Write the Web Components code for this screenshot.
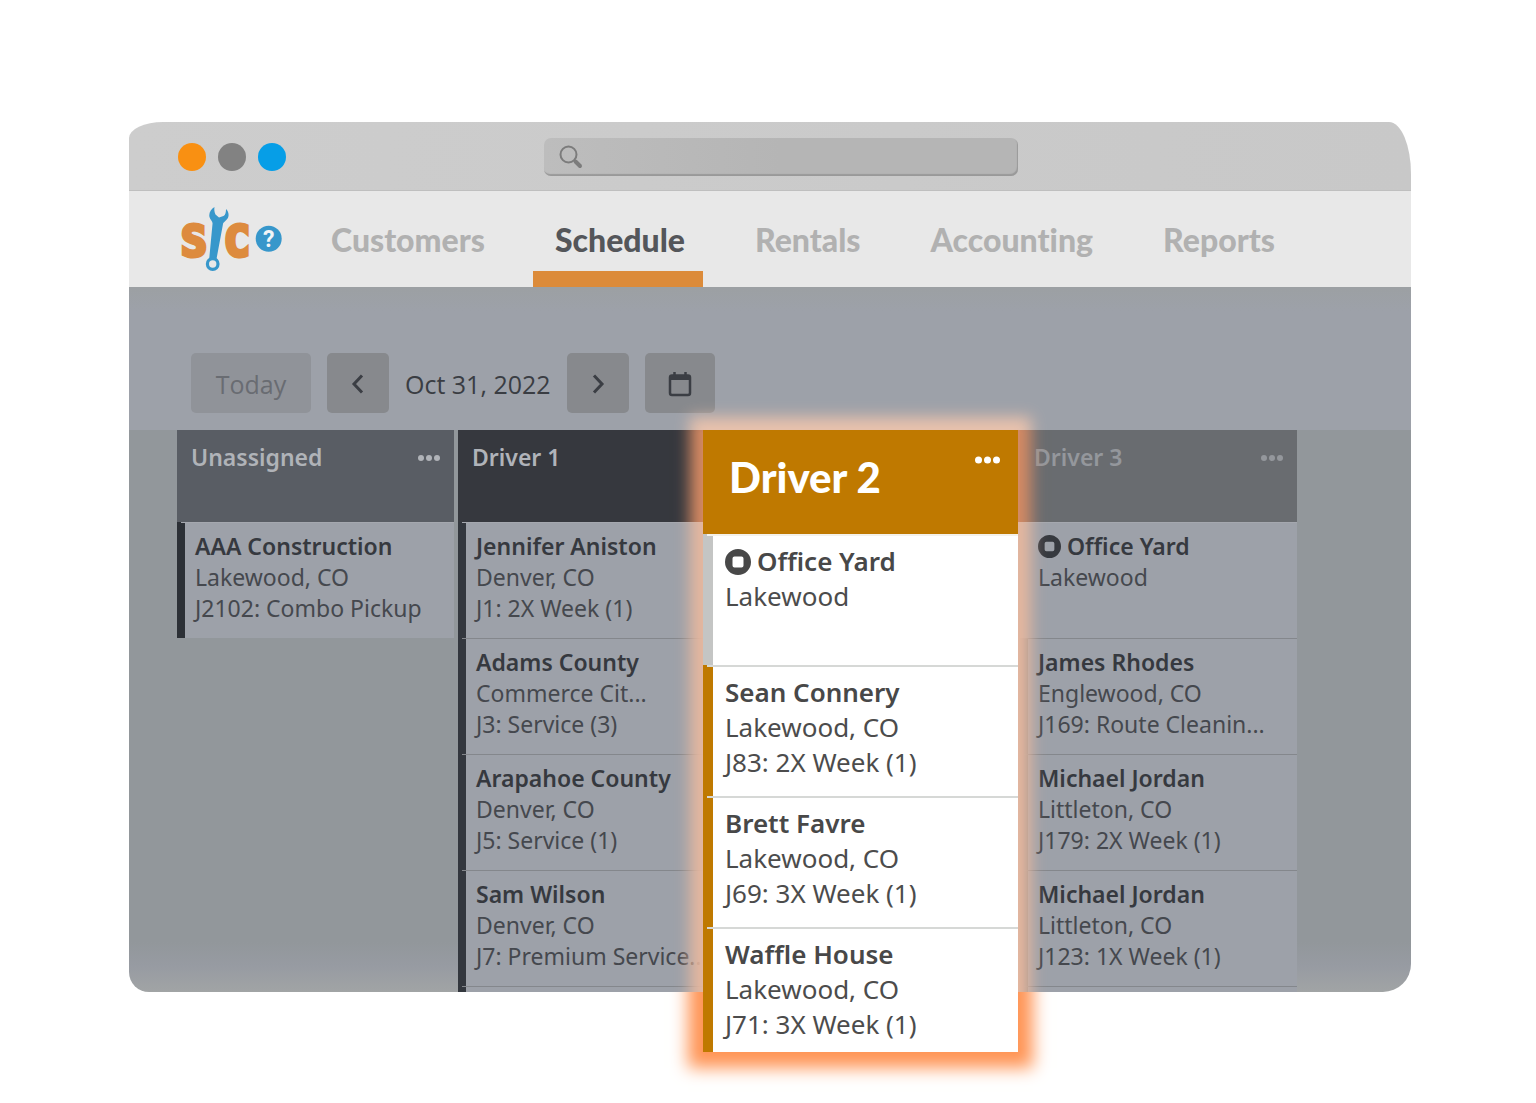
<!DOCTYPE html>
<html lang="en">
<head>
<meta charset="utf-8">
<meta name="viewport" content="width=device-width, initial-scale=1">
<title>Schedule</title>
<style>
  body { margin: 0; background: #fff; font-family: "Noto Sans", "Open Sans", sans-serif; color: #36393f; }
</style>
</head>
<body>
<app-window>
  <title-bar></title-bar>
  <main-nav>
    <nav-tab>Customers</nav-tab>
    <nav-tab active>Schedule</nav-tab>
    <nav-tab>Rentals</nav-tab>
    <nav-tab>Accounting</nav-tab>
    <nav-tab>Reports</nav-tab>
  </main-nav>
  <date-toolbar date="Oct 31, 2022"></date-toolbar>
  <schedule-board>
    <driver-column name="Unassigned" menu style="--head:#595d64;--head-text:#b0b3b8;--bar:#2c3036">
      <job-card name="AAA Construction" place="Lakewood, CO" job="J2102: Combo Pickup"></job-card>
    </driver-column>
    <driver-column name="Driver 1" style="--head:#36383e;--head-text:#b0b3b9;--bar:#33373e">
      <job-card name="Jennifer Aniston" place="Denver, CO" job="J1: 2X Week (1)"></job-card>
      <job-card name="Adams County" place="Commerce Cit..." job="J3: Service (3)"></job-card>
      <job-card name="Arapahoe County" place="Denver, CO" job="J5: Service (1)"></job-card>
      <job-card name="Sam Wilson" place="Denver, CO" job="J7: Premium Service..."></job-card>
      <job-card peek></job-card>
    </driver-column>
    <focus-column name="Driver 2">
      <job-card large yard name="Office Yard" place="Lakewood"></job-card>
      <job-card large name="Sean Connery" place="Lakewood, CO" job="J83: 2X Week (1)"></job-card>
      <job-card large name="Brett Favre" place="Lakewood, CO" job="J69: 3X Week (1)"></job-card>
      <job-card large last name="Waffle House" place="Lakewood, CO" job="J71: 3X Week (1)"></job-card>
    </focus-column>
    <driver-column name="Driver 3" menu style="--head:#696c70;--head-text:#94979c;--bar:#7f8286">
      <job-card yard name="Office Yard" place="Lakewood"></job-card>
      <job-card name="James Rhodes" place="Englewood, CO" job="J169: Route Cleanin..."></job-card>
      <job-card name="Michael Jordan" place="Littleton, CO" job="J179: 2X Week (1)"></job-card>
      <job-card name="Michael Jordan" place="Littleton, CO" job="J123: 1X Week (1)"></job-card>
      <job-card peek></job-card>
    </driver-column>
  </schedule-board>
</app-window>

<script>
const define = (tag, render) => customElements.define(tag, class extends HTMLElement {
  constructor() { super(); this.attachShadow({ mode: "open" }); }
  connectedCallback() { this.shadowRoot.innerHTML = render(this); }
});

define("app-window", () => `
  <style>
    :host { display: block; box-sizing: border-box; padding: 122px 125px 110px 129px; }
    main { display: flex; flex-direction: column; }
  </style>
  <main><slot></slot></main>`);

define("title-bar", () => `
  <style>
    :host { display: grid; grid-template-columns: 1fr 474px 1fr; align-items: center; box-sizing: border-box;
      height: 69px; padding: 1px 27px 0 49px; background: linear-gradient(90deg, #cdcdcd, #c8c8c8);
      border-bottom: 1px solid #bfbfbf; border-radius: 34px 22px 0 0 / 16px 52px 0 0; }
    .dots { display: flex; gap: 12px; }
    .dots i { width: 28px; height: 28px; border-radius: 50%; background: var(--c); }
    label { display: flex; align-items: center; gap: 10px; box-sizing: border-box; height: 38px; padding: 0 15px;
      border-radius: 7px; background: linear-gradient(90deg, #bdbdbd, #b5b5b5 50%);
      box-shadow: inset -1px -2px 1px #999; }
    input { flex: 1; min-width: 0; border: 0; outline: 0; background: none; font: 18px "Open Sans", sans-serif; }
  </style>
  <div class="dots"><i style="--c:#f99012"></i><i style="--c:#828282"></i><i style="--c:#069ee7"></i></div>
  <label>
    <svg width="24" height="24" viewBox="0 0 24 24" fill="none" stroke="#7c7c7c" aria-hidden="true">
      <circle cx="9.5" cy="9.5" r="8" stroke-width="2"/><path d="M15 15l2 2" stroke-width="2"/><path d="M16.500 16.500l4.500 4.500" stroke-width="4" stroke-linecap="round"/>
    </svg>
    <input type="search" aria-label="Search">
  </label>`);

define("main-nav", () => `
  <style>
    :host { display: flex; height: 96px; background: #e8e8e8; padding-left: 51px; }
    .logo { flex: none; margin: 15px 26px 0 0; }
    nav { display: flex; gap: 30px; }
  </style>
  <svg class="logo" width="103" height="66" viewBox="0 0 103 66" role="img" aria-label="Service logo">
    <g fill="#dd8b3e" stroke="#dd8b3e" stroke-width="4" font-family="DejaVu Sans Mono, monospace" font-weight="700" font-size="43">
      <text x="1" y="50">S</text><text x="44" y="50">C</text>
    </g>
    <path d="M34.500 1C31 3 28.500 7 29.500 11C30 14 33 15 32.500 18L29.200 53H36.500L43 18C43 16 48 14 48.500 10C48.800 7 48 5 46 3C46 6 45.500 9 43.500 10L39 11.500L35.500 8.500C34.500 6 34 4 34.500 1Z" fill="#3797cb" stroke="#e8e8e8" stroke-width="3" paint-order="stroke"/>
    <circle cx="32.700" cy="58" r="5.300" fill="#e8e8e8" stroke="#3797cb" stroke-width="3.200"/>
    <circle cx="88.700" cy="32.700" r="13" fill="#3797cb"/>
    <text x="88.700" y="41" text-anchor="middle" fill="#f2f5f7" font-family="Roboto, sans-serif" font-weight="700" font-size="23">?</text>
  </svg>
  <nav aria-label="Main"><slot></slot></nav>`);

define("nav-tab", el => `
  <style>
    :host { display: flex; }
    a { display: flex; align-items: center; box-sizing: border-box; padding: 17px 18px 0 22px; border-bottom: 16px solid transparent;
      font: 900 32px/40px Lato, sans-serif; font-variant-ligatures: none; color: #b1b1b1; text-decoration: none; }
    a.on { color: #54565a; border-color: #dc8b3a; }
  </style>
  <a href="#" class="${el.hasAttribute("active") ? "on" : ""}"><slot></slot></a>`);

define("date-toolbar", el => `
  <style>
    :host { display: flex; align-items: center; gap: 16px; padding: 66px 62px 17px; background: linear-gradient(#9ca0a3, #9da1a9 24px); }
    button { display: flex; align-items: center; justify-content: center; box-sizing: border-box; width: 62px; height: 60px;
      padding: 2px 0 0; border: 0; border-radius: 5px; background: #87898d; color: #3b3e44; font: 25px/32px "Open Sans", sans-serif; }
    .today { width: 120px; background: #909399; color: #696c72; }
    .cal { width: 70px; }
    time { padding-top: 2px; font: 25px/32px "Open Sans", sans-serif; color: #3a3d43; }
  </style>
  <button class="today">Today</button>
  <button aria-label="Previous day"><svg width="14" height="22" viewBox="0 0 14 22" fill="none" stroke="currentColor" stroke-width="3"><path d="M11 2.500L3 11l8 8.500"/></svg></button>
  <time datetime="2022-10-31">${el.getAttribute("date")}</time>
  <button aria-label="Next day"><svg width="14" height="22" viewBox="0 0 14 22" fill="none" stroke="currentColor" stroke-width="3"><path d="M3 2.500l8 8.500-8 8.500"/></svg></button>
  <button class="cal" aria-label="Pick a date"><svg width="24" height="26" viewBox="0 0 24 26" fill="none" stroke="currentColor"><rect x="2" y="4.500" width="20" height="19.500" rx="2" stroke-width="2.500"/><path d="M2 6.500h20" stroke-width="5"/><path d="M6.500 1v4M17.500 1v4" stroke-width="2.500"/></svg></button>`);

define("schedule-board", () => `
  <style>
    :host { display: grid; grid-template-columns: repeat(4, minmax(0, 1fr)); gap: 4px; padding: 0 114px 0 48px;
      border-radius: 0 0 28px 20px; background: linear-gradient(#92979b calc(100% - 50px), #979ba2 calc(100% - 26px), #a1a4a5); }
  </style>
  <slot></slot>`);

const dots = (w, r) => `<svg width="${w}" height="8" viewBox="0 0 ${w} 8" fill="currentColor" aria-hidden="true"><circle cx="${r}" cy="4" r="${r}"/><circle cx="${w / 2}" cy="4" r="${r}"/><circle cx="${w - r}" cy="4" r="${r}"/></svg>`;

define("driver-column", el => `
  <style>
    :host { display: flex; flex-direction: column; }
    header { display: flex; justify-content: space-between; align-items: flex-start; box-sizing: border-box; height: 92px;
      padding: 12px 14px 0 14px; background: var(--head); color: var(--head-text); }
    h2 { margin: 0; font-size: 23px; line-height: 31px; font-weight: 600; }
    button { display: flex; align-items: center; height: 31px; padding: 0; border: 0; background: none; color: inherit; }
  </style>
  <header><h2>${el.getAttribute("name")}</h2>${el.hasAttribute("menu") ? `<button aria-label="Column menu">${dots(22, 3)}</button>` : ""}</header>
  <slot></slot>`);

define("focus-column", el => `
  <style>
    :host { display: block; position: relative; }
    section { position: absolute; top: 0; left: -36px; right: -2px; --bar: #bf7900; --board: 562px; --head-line: 92px; }
    .glow { position: absolute; inset: 0; }
    .pale { box-shadow: 0 0 14px 13px #e9c2ad; clip-path: inset(-40px -40px 100% -40px); }
    .sides { box-shadow: 0 0 14px 13px #e5b79f; clip-path: inset(var(--head-line) -40px calc(100% - var(--board)) -40px); }
    .head { box-shadow: 0 0 14px 13px #d58a63; clip-path: inset(0 -40px calc(100% - var(--head-line)) -40px); }
    .strong { box-shadow: 0 1px 16px 15px #ff9556; clip-path: inset(var(--board) -40px -40px -40px); }
    header { position: relative; display: flex; justify-content: space-between; box-sizing: border-box; height: 104px;
      padding: 22px 18px 0 26px; background: #bf7900; color: #fff; }
    h2 { margin: 0; font: 900 42px/50px Lato, sans-serif; }
    button { display: flex; align-items: center; height: 16px; padding: 0; border: 0; background: none; color: inherit; }
    .list { position: relative; display: flex; flex-direction: column; }
  </style>
  <section>
    <div class="glow pale"></div><div class="glow sides"></div><div class="glow head"></div><div class="glow strong"></div>
    <header><h2>${el.getAttribute("name")}</h2><button aria-label="Column menu">${dots(25, 3.5)}</button></header>
    <div class="list"><slot></slot></div>
  </section>`);

define("job-card", el => {
  const get = n => el.getAttribute(n) || "";
  const big = el.hasAttribute("large"), yard = el.hasAttribute("yard");
  const size = big ? 26 : 23;
  const style = `<style>
    :host { --w: 8px; --line: 1px; --edge: #84878c; --fill: #9da1a9; display: block; box-sizing: border-box; height: 116px; padding: 9px 0 0 18px; color: #45484e;
      background:
        linear-gradient(var(--edge), var(--edge)) 4px 0 / 100% var(--line) no-repeat,
        linear-gradient(90deg, var(--bar) var(--w), var(--fill) var(--w)); }
    :host(:first-child) { --edge: #a5a8af; }
    :host([yard]) { --bar: #9da1a9; }
    :host([large]) { --w: 10px; --line: 2px; --edge: #d6d8d6; --fill: #fff; height: 131px; padding: 10px 0 0 22px; color: #4c4c4c; }
    :host([large][yard]) { --bar: #c4c5c4; --edge: #f4f1ea; }
    :host([last]) { height: 125px; }
    :host([peek]) { height: 6px; padding: 0; }
    h3, p { margin: 0; font-size: 23px; line-height: 31px; white-space: nowrap; }
    h3 { display: flex; align-items: center; gap: 6px; font-weight: 600; color: #36393f; }
    :host([large]) h3, :host([large]) p { font-size: 26px; line-height: 35px; }
    :host([large]) h3 { color: #484848; }
    svg { flex: none; }
  </style>`;
  if (el.hasAttribute("peek")) return style;
  const icon = yard ? `<svg width="${size}" height="${size}" viewBox="0 0 26 26" aria-hidden="true"><path fill="currentColor" fill-rule="evenodd" d="M13 0a13 13 0 1 0 0 26a13 13 0 1 0 0-26zM9.500 7.500h7a2 2 0 0 1 2 2v7a2 2 0 0 1-2 2h-7a2 2 0 0 1-2-2v-7a2 2 0 0 1 2-2z"/></svg>` : "";
  return `${style}<h3>${icon}<span>${get("name")}</span></h3><p>${get("place")}</p>${get("job") ? `<p>${get("job")}</p>` : ""}`;
});
</script>
</body>
</html>
